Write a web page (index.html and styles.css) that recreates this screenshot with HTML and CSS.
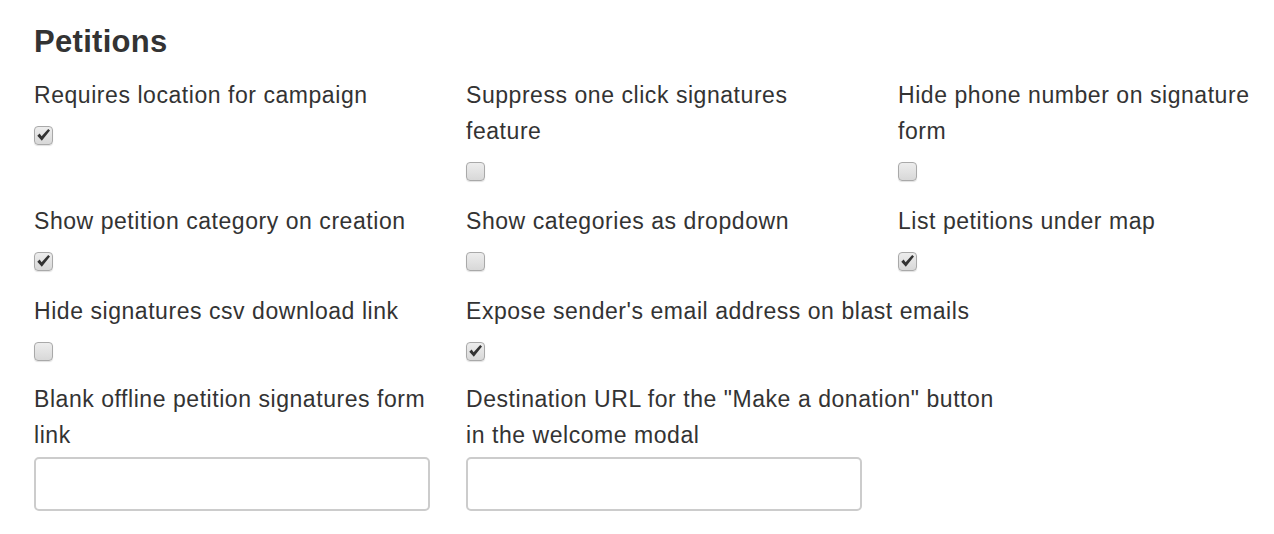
FILE: index.html
```html
<!DOCTYPE html>
<html lang="en">
<head>
  <meta charset="UTF-8">
  <meta name="viewport" content="width=device-width, initial-scale=1.0">
  <title>Petitions</title>
  <link rel="stylesheet" href="styles.css">
</head>
<body>
  <div class="seccion">
    <h2>Petitions</h2>
    <div class="opciones">
      <div class="campo">
        <label>Requires location for campaign</label>
        <span class="caja marcada"><svg viewBox="0 0 19 19"><path d="M3.3 9.8 L5.6 7.6 L7.6 10.2 L14.2 3 L16 4.6 L7.8 14.7 Z"/></svg></span>
      </div>
      <div class="campo">
        <label>Suppress one click signatures<br>feature</label>
        <span class="caja"></span>
      </div>
      <div class="campo">
        <label>Hide phone number on signature<br>form</label>
        <span class="caja"></span>
      </div>

      <div class="campo">
        <label>Show petition category on creation</label>
        <span class="caja marcada"><svg viewBox="0 0 19 19"><path d="M3.3 9.8 L5.6 7.6 L7.6 10.2 L14.2 3 L16 4.6 L7.8 14.7 Z"/></svg></span>
      </div>
      <div class="campo">
        <label>Show categories as dropdown</label>
        <span class="caja"></span>
      </div>
      <div class="campo">
        <label>List petitions under map</label>
        <span class="caja marcada"><svg viewBox="0 0 19 19"><path d="M3.3 9.8 L5.6 7.6 L7.6 10.2 L14.2 3 L16 4.6 L7.8 14.7 Z"/></svg></span>
      </div>

      <div class="campo">
        <label>Hide signatures csv download link</label>
        <span class="caja"></span>
      </div>
      <div class="campo ancho">
        <label>Expose sender's email address on blast emails</label>
        <span class="caja marcada"><svg viewBox="0 0 19 19"><path d="M3.3 9.8 L5.6 7.6 L7.6 10.2 L14.2 3 L16 4.6 L7.8 14.7 Z"/></svg></span>
      </div>

      <div class="campo con-texto">
        <label>Blank offline petition signatures form<br>link</label>
        <input type="text" class="texto">
      </div>
      <div class="campo ancho con-texto">
        <label>Destination URL for the "Make a donation" button<br>in the welcome modal</label>
        <input type="text" class="texto">
      </div>
    </div>
  </div>
</body>
</html>
```

FILE: styles.css
```css
body {
  margin: 0;
  padding: 0;
  background: #fff;
  color: #333;
  font-family: 'Liberation Sans', Arial, sans-serif;
}

.seccion {
  padding: 25px 0 0 34px;
}

.seccion h2 {
  margin: 0 0 18px;
  font-size: 31px;
  line-height: 34px;
  letter-spacing: 0.3px;
  font-weight: bold;
  color: #333;
}

.opciones {
  display: grid;
  grid-template-columns: 432px 432px 432px;
  row-gap: 22px;
}

.campo {
  display: flex;
  flex-direction: column;
  align-items: flex-start;
}

.campo.ancho {
  grid-column: span 2;
}

.campo.con-texto {
  margin-top: -2px;
}

.campo label {
  font-size: 23px;
  line-height: 36px;
  letter-spacing: 0.55px;
  white-space: nowrap;
}

.caja {
  box-sizing: border-box;
  width: 19px;
  height: 19px;
  margin-top: 13px;
  border: 1px solid #a9a9a9;
  border-radius: 4px;
  background: linear-gradient(#ededed, #d8d8d8);
  box-shadow: 0 1px 1px rgba(0, 0, 0, 0.12);
  display: flex;
  align-items: center;
  justify-content: center;
}

.caja svg {
  flex: none;
  width: 19px;
  height: 19px;
}

.caja svg path {
  fill: #333;
}

.texto {
  box-sizing: border-box;
  width: 396px;
  height: 54px;
  margin-top: 4px;
  border: 2px solid #ccc;
  border-radius: 5px;
  background: #fff;
  outline: none;
}
```
